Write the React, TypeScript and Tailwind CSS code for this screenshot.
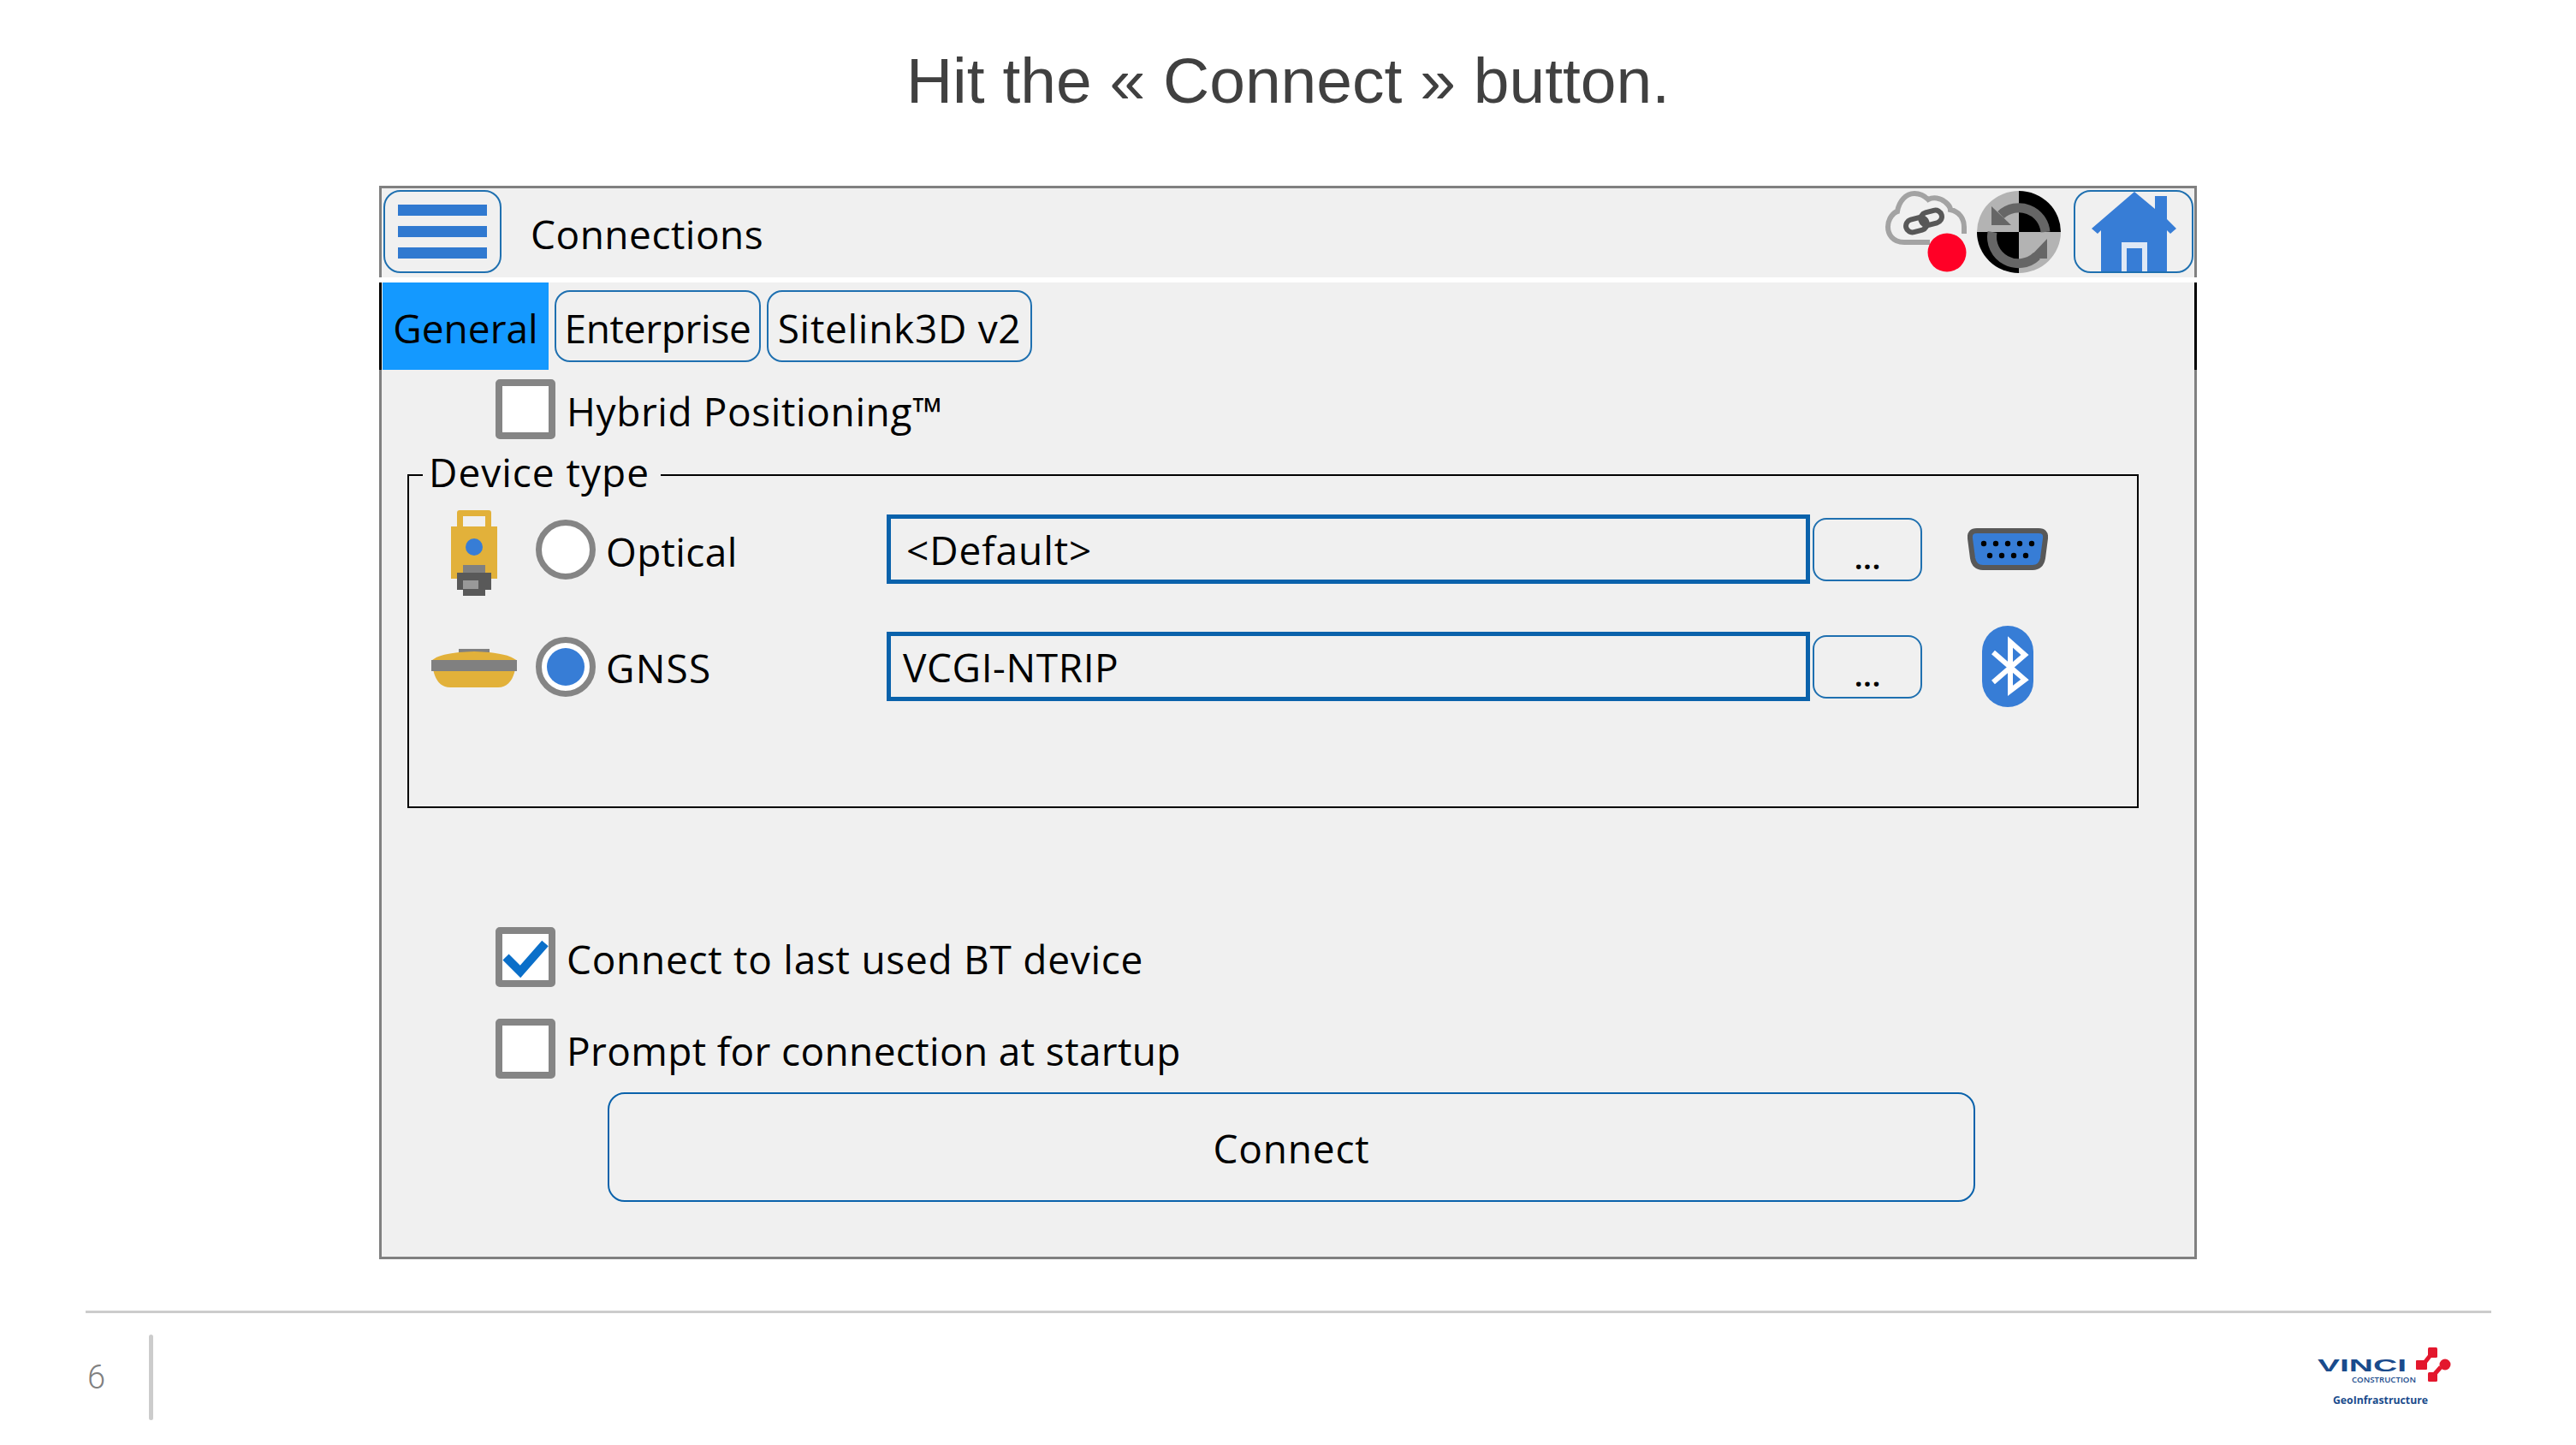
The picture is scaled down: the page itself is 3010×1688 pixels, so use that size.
const ui = "font-['Open_Sans',sans-serif] text-[46px] leading-[56px] text-black"

function Checkbox({ checked }: { checked?: boolean }) {
  return (
    <div className="flex h-[70px] w-[70px] shrink-0 items-center justify-center rounded-[5px] border-[8px] border-[#858585] bg-white">
      {checked && (
        <svg width="54" height="54" viewBox="0 0 54 54">
          <path d="M4 27 L21 44 L50 11" fill="none" stroke="#0a6fc9" strokeWidth="10" />
        </svg>
      )}
    </div>
  )
}

function Radio({ checked }: { checked?: boolean }) {
  return (
    <div className="ml-[22px] flex h-[70px] w-[70px] shrink-0 items-center justify-center rounded-full border-[7px] border-[#858585] bg-white">
      {checked && <div className="h-[44px] w-[44px] rounded-full bg-[#377dd6]" />}
    </div>
  )
}

function MoreButton() {
  return (
    <div className="ml-[3px] flex h-[74px] w-[128px] shrink-0 items-center justify-center rounded-[16px] border-[2px] border-[#1f70b0]">
      <span className="mt-[16px] font-['Open_Sans',sans-serif] text-[38px] leading-[38px] font-semibold text-black">...</span>
    </div>
  )
}

function HomeIcon() {
  return (
    <svg width="99" height="93" viewBox="0 0 99 93">
      <path d="M50 0 L74 20 V5 H88 V32 L99 43 L92 49 L88 45 V93 H11 V45 L7 49 L0 43 Z" fill="#377dd6" />
      <rect x="35" y="59" width="30" height="34" fill="#dfe8f5" />
      <rect x="41" y="66" width="18" height="27" fill="#377dd6" />
    </svg>
  )
}

function CloudIcon() {
  return (
    <svg width="95" height="95" viewBox="0 0 95 95">
      <path
        d="M52 60 H22 C8 60 3 50 3 42 C3 32 10 25 14 24 C16 12 24 3 34 3 C42 3 46 6 50 10 C56 7 64 8 70 13 C74 16 76 20 76 22 C86 24 92 32 92 42 V50"
        fill="none"
        stroke="#a3a3a3"
        strokeWidth="6"
      />
      <rect x="24" y="32" width="25" height="15" rx="7.5" transform="rotate(-15 37 40)" fill="none" stroke="#585858" strokeWidth="6" />
      <rect x="41" y="24" width="25" height="15" rx="7.5" transform="rotate(-15 53 31)" fill="none" stroke="#585858" strokeWidth="6" />
      <circle cx="72" cy="72" r="22.5" fill="#ff0026" />
    </svg>
  )
}

function SyncIcon() {
  return (
    <svg width="98" height="96" viewBox="0 0 98 96">
      <path d="M49 48 V0 A49 48 0 0 0 0 48 Z" fill="#b3b3b3" />
      <path d="M49 48 V0 A49 48 0 0 1 98 48 Z" fill="#000" />
      <path d="M49 48 H0 A49 48 0 0 0 49 96 Z" fill="#000" />
      <path d="M49 48 H98 A49 48 0 0 1 49 96 Z" fill="#b3b3b3" />
      <path d="M28 28 A31 31 0 0 1 80 48" fill="none" stroke="#666" strokeWidth="11" />
      <path d="M18 48 A31 31 0 0 0 70 76" fill="none" stroke="#666" strokeWidth="11" />
      <path d="M17 18 V40 H40 Z" fill="#666" />
      <path d="M82 56 V79 H60 Z" fill="#666" />
    </svg>
  )
}

function TotalStationIcon() {
  return (
    <svg width="54" height="100" viewBox="0 0 54 100">
      <rect x="7" y="0" width="40" height="22" rx="3" fill="#e2b13a" />
      <rect x="14" y="7" width="26" height="13" fill="#f0f0f0" />
      <rect x="0" y="19" width="54" height="61" fill="#e2b13a" />
      <circle cx="27" cy="43" r="10" fill="#377dd6" />
      <rect x="14" y="64" width="26" height="10" fill="#808080" />
      <rect x="7" y="73" width="40" height="20" fill="#595959" />
      <rect x="14" y="93" width="26" height="7" fill="#595959" />
      <rect x="14" y="82" width="18" height="10" fill="#999" />
    </svg>
  )
}

function RoverIcon() {
  return (
    <svg width="100" height="45" viewBox="0 0 100 45">
      <rect x="32" y="0" width="36" height="5" fill="#808080" />
      <path d="M0 14 C6 8 20 4 50 3 C80 4 94 8 100 14 L97 28 C94 38 88 45 78 45 H22 C12 45 6 38 3 28 Z" fill="#e2b13a" />
      <rect x="0" y="13" width="100" height="13" fill="#808080" />
    </svg>
  )
}

function SerialIcon() {
  return (
    <svg width="94" height="49" viewBox="0 0 94 49">
      <path d="M11 3 H83 Q92 3 91 12 L88 35 Q86 46 76 46 H18 Q8 46 6 35 L3 12 Q2 3 11 3 Z" fill="#377dd6" stroke="#585858" strokeWidth="6" />
      {[19, 33, 47, 61, 75].map((x) => (
        <circle key={x} cx={x} cy="18" r="3.2" fill="#000" />
      ))}
      {[26, 40, 54, 68].map((x) => (
        <circle key={x} cx={x} cy="32" r="3.2" fill="#000" />
      ))}
    </svg>
  )
}

function BluetoothIcon() {
  return (
    <svg width="60" height="95" viewBox="0 0 60 95">
      <rect width="60" height="95" rx="30" fill="#377dd6" />
      <path d="M13 31 L50 63 L33 76 V19 L50 34 L13 66" fill="none" stroke="#fff" strokeWidth="6" />
    </svg>
  )
}

function VinciLogo() {
  return (
    <svg width="170" height="80" viewBox="0 0 170 80">
      <text x="8" y="33" fontFamily="Liberation Sans" fontWeight="700" fontSize="20" fill="#1a4b8c" textLength="104" lengthAdjust="spacingAndGlyphs">VINCI</text>
      <text x="48" y="46" fontFamily="Open Sans" fontWeight="600" fontSize="8.5" fill="#1a4b8c" textLength="75" lengthAdjust="spacingAndGlyphs">CONSTRUCTION</text>
      <text x="26" y="71" fontFamily="Open Sans" fontWeight="700" fontSize="12" fill="#1a4b8c" textLength="111" lengthAdjust="spacingAndGlyphs">GeoInfrastructure</text>
      <rect x="137" y="5" width="11" height="12" rx="1.5" fill="#e3172d" />
      <rect x="123" y="20" width="13" height="11" rx="1" fill="#e3172d" />
      <circle cx="157" cy="25" r="6.5" fill="#e3172d" />
      <rect x="137" y="34" width="11" height="11" rx="1.5" fill="#e3172d" />
      <path d="M140 14 L133 23" stroke="#e3172d" strokeWidth="5" />
      <path d="M152 28 L144 37" stroke="#e3172d" strokeWidth="5" />
    </svg>
  )
}

export default function App() {
  return (
    <div className="flex h-[1688px] w-[3010px] flex-col overflow-hidden bg-white">
      <div className="flex h-[217px] shrink-0 justify-center pt-[50px]">
        <h1 className="font-['Liberation_Sans',sans-serif] text-[75px] leading-[88px] font-normal text-[#404040]">
          Hit the « Connect » button.
        </h1>
      </div>

      <div className="ml-[443px] flex h-[1254px] w-[2124px] shrink-0 flex-col">
        <div className="flex h-[107px] shrink-0 items-center border-x-[3px] border-t-[3px] border-[#808080] bg-[#f0f0f0] pb-[3px]">
          <div className="ml-[2px] flex h-[97px] w-[138px] shrink-0 flex-col items-center justify-center gap-[12px] rounded-[20px] border-[2px] border-[#1f70b0]">
            <div className="h-[13px] w-[104px] bg-[#3079d0]" />
            <div className="h-[13px] w-[104px] bg-[#3079d0]" />
            <div className="h-[13px] w-[104px] bg-[#3079d0]" />
          </div>
          <span className={`ml-[34px] pt-[4px] tracking-[0.5px] ${ui}`}>Connections</span>
          <div className="ml-auto flex items-center">
            <CloudIcon />
            <div className="ml-[12px]">
              <SyncIcon />
            </div>
            <div className="mr-[1px] ml-[15px] flex h-[97px] w-[140px] items-center justify-center rounded-[20px] border-[2px] border-[#1f70b0]">
              <HomeIcon />
            </div>
          </div>
        </div>

        <div className="mt-[6px] flex min-h-0 flex-1 flex-col bg-[#f0f0f0]">
          <div className="flex h-[102px] shrink-0 items-center gap-[7px] border-x-[3px] border-black pl-[1px]">
            <div className={`flex h-full w-[194px] items-center justify-center bg-[#1499ff] pt-[4px] ${ui}`}>General</div>
            <div className={`flex h-[84px] w-[241px] items-center justify-center rounded-[18px] border-[2px] border-[#1f70b0] pt-[4px] tracking-[-0.3px] ${ui}`}>Enterprise</div>
            <div className={`flex h-[84px] w-[310px] items-center justify-center rounded-[18px] border-[2px] border-[#1f70b0] pt-[4px] tracking-[0.7px] ${ui}`}>Sitelink3D v2</div>
          </div>

          <div className="flex flex-1 flex-col border-x-[3px] border-b-[3px] border-[#808080]">
            <div className="mt-[11px] ml-[133px] flex items-center gap-[13px]">
              <Checkbox />
              <span className={`pt-[4px] tracking-[0.6px] ${ui}`}>Hybrid Positioning™</span>
            </div>

            <fieldset className="mt-[12px] ml-[30px] h-[419px] w-[2023px] border-[2px] border-black">
              <legend className="ml-[16px] pr-[13px] pl-[7px] font-['Open_Sans',sans-serif] text-[46px] leading-[60px] tracking-[1px] text-black">
                <span className="block -translate-y-[4px]">Device type</span>
              </legend>
              <div className="mt-[16px] flex h-[81px] items-center">
                <div className="ml-[26px] flex w-[100px] justify-center">
                  <div className="mt-[9px]">
                    <TotalStationIcon />
                  </div>
                </div>
                <Radio />
                <span className={`ml-[12px] w-[328px] pt-[4px] tracking-[0.35px] ${ui}`}>Optical</span>
                <div className="flex h-[81px] w-[1079px] shrink-0 items-center border-[5px] border-[#0a62ab] pl-[18px]">
                  <span className={`tracking-[0.9px] ${ui}`}>{"<Default>"}</span>
                </div>
                <MoreButton />
                <div className="ml-[50px] flex w-[100px] justify-center">
                  <SerialIcon />
                </div>
              </div>
              <div className="mt-[56px] flex h-[81px] items-center">
                <div className="ml-[26px] flex w-[100px] justify-center">
                  <div className="mt-[4px]">
                    <RoverIcon />
                  </div>
                </div>
                <Radio checked />
                <span className={`ml-[12px] w-[328px] pt-[3px] tracking-[1.2px] ${ui}`}>GNSS</span>
                <div className="flex h-[81px] w-[1079px] shrink-0 items-center border-[5px] border-[#0a62ab] pl-[14px]">
                  <span className={`tracking-[0.6px] ${ui}`}>VCGI-NTRIP</span>
                </div>
                <MoreButton />
                <div className="ml-[50px] flex w-[100px] justify-center">
                  <BluetoothIcon />
                </div>
              </div>
            </fieldset>

            <div className="mt-[139px] ml-[133px] flex items-center gap-[13px]">
              <Checkbox checked />
              <span className={`pt-[4px] tracking-[0.73px] ${ui}`}>Connect to last used BT device</span>
            </div>
            <div className="mt-[37px] ml-[133px] flex items-center gap-[13px]">
              <Checkbox />
              <span className={`pt-[3px] tracking-[0.36px] ${ui}`}>Prompt for connection at startup</span>
            </div>
            <div className={`mt-[16px] ml-[264px] flex h-[128px] w-[1598px] items-center justify-center rounded-[20px] border-[2px] border-[#0a62ab] pt-[2px] tracking-[0.8px] ${ui}`}>
              Connect
            </div>
          </div>
        </div>
      </div>

      <div className="mt-[60px] ml-[100px] h-[3px] w-[2811px] shrink-0 bg-[#cccccc]" />
      <div className="mt-[25px] flex h-[100px] shrink-0 items-center pr-[140px] pl-[102px]">
        <span className="font-['Roboto',sans-serif] text-[38px] font-light text-[#808080]">6</span>
        <div className="ml-[51px] h-[100px] w-[5px] rounded-full bg-[#cccccc]" />
        <div className="ml-auto">
          <VinciLogo />
        </div>
      </div>
    </div>
  )
}
